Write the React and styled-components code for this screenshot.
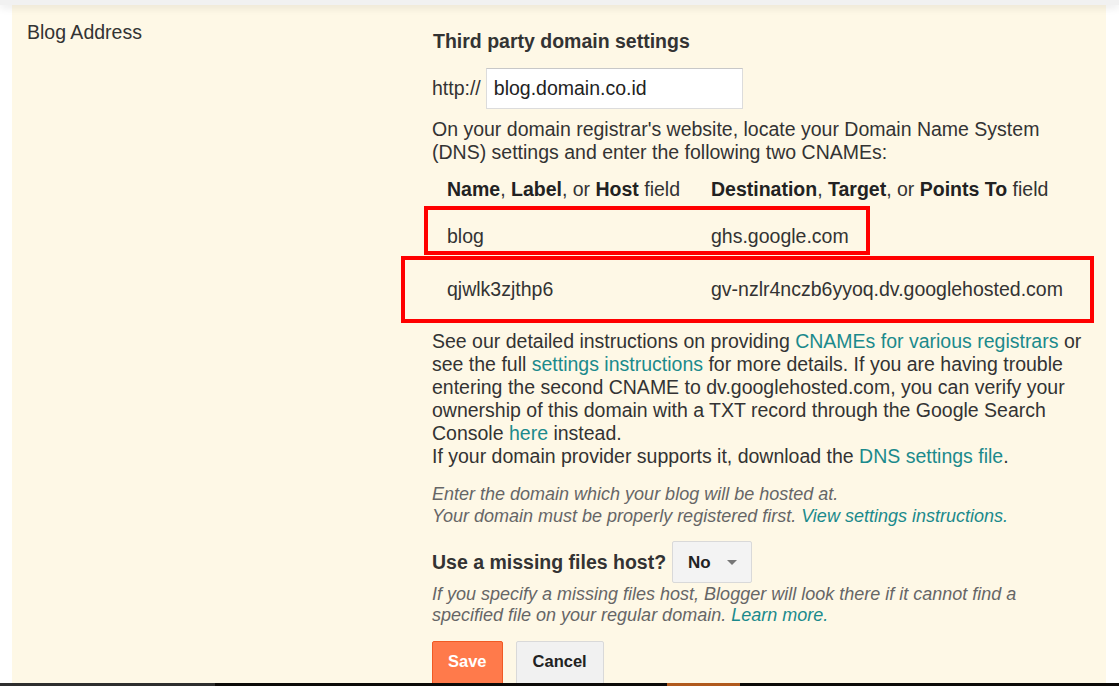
import React from "react";
import styled, { createGlobalStyle } from "styled-components";

const GlobalStyle = createGlobalStyle`
  html, body {
    margin: 0;
    padding: 0;
    background: #ffffff;
    overflow: hidden;
  }
  body {
    font-family: "Liberation Sans", Arial, sans-serif;
    color: #333;
  }
`;

const Page = styled.div`
  width: 1119px;
  height: 686px;
  position: relative;
  overflow: hidden;
  background: #fff;
`;

const TopStrip = styled.div`
  height: 5px;
  background: #f1f1f1;
  box-shadow: 0 2px 8px rgba(0, 0, 0, 0.12);
  position: relative;
  z-index: 1;
`;

const Panel = styled.div`
  margin: 0 13px 0 12px;
  background: #fef8e6;
  display: grid;
  grid-template-columns: 405px 1fr;
  padding: 14px 0 40px 15px;
  min-height: 800px;
`;

const Label = styled.div`
  font-size: 19.5px;
  line-height: 26px;
  color: #333;
`;

const Content = styled.div`
  font-size: 19.5px;
  line-height: 23px;
  color: #333;
  padding-top: 9px;
  max-width: 658px;
`;

const Title = styled.h3`
  margin: 0 0 14px 1px;
  font-size: 19.5px;
  font-weight: bold;
  color: #333;
  line-height: 26px;
`;

const UrlRow = styled.div`
  display: flex;
  align-items: center;
  gap: 5px;
  margin-bottom: 9px;
`;

const TextInput = styled.div`
  width: 257px;
  height: 41px;
  box-sizing: border-box;
  border: 1px solid #dcdcdc;
  border-top-color: #c8c8c8;
  background: #fff;
  padding: 0 7px;
  display: flex;
  align-items: center;
  font-size: 19.5px;
  color: #222;
`;

const Para = styled.p`
  margin: 0;
`;

const TableWrap = styled.div`
  position: relative;
  margin: 14px 0 11px;
`;

const Table = styled.table`
  border-collapse: collapse;
  font-size: 19.5px;
  color: #333;
`;

const Th = styled.th`
  text-align: left;
  font-weight: normal;
  padding: 0 15px 12px 15px;
  width: ${(p) => p.w || "auto"};
  white-space: nowrap;
  b {
    font-weight: bold;
    color: #222;
  }
`;

const Td = styled.td`
  padding: 12px 15px 18px;
  white-space: nowrap;
`;

const RedBox = styled.div`
  position: absolute;
  border: 4px solid #ff0000;
  box-sizing: border-box;
  pointer-events: none;
`;

const Link = styled.a`
  color: #1b8a8c;
  text-decoration: none;
`;

const Hint = styled.div`
  margin-top: 15px;
  font-size: 18px;
  line-height: 22px;
  font-style: italic;
  color: #666;
`;

const MissingRow = styled.div`
  display: flex;
  align-items: center;
  gap: 6px;
  margin-top: 14px;
`;

const BoldLabel = styled.span`
  font-weight: bold;
  color: #333;
`;

const Select = styled.div`
  width: 80px;
  height: 42px;
  box-sizing: border-box;
  border: 1px solid #d9d9d9;
  border-radius: 2px;
  background: #f3f3f3;
  display: flex;
  align-items: center;
  padding-left: 15px;
  gap: 16px;
  font-weight: bold;
  font-size: 17px;
  color: #222;
`;

const Caret = styled.span`
  width: 0;
  height: 0;
  border-left: 5px solid transparent;
  border-right: 5px solid transparent;
  border-top: 5px solid #777;
`;

const Hint2 = styled.div`
  margin-top: 1px;
  font-size: 18px;
  line-height: 21px;
  font-style: italic;
  color: #666;
`;

const Buttons = styled.div`
  display: flex;
  gap: 13px;
  margin-top: 15px;
`;

const Button = styled.button`
  height: 48px;
  padding: 0 ${(p) => (p.primary ? "15px" : "16px")} 8px;
  font-family: "Liberation Sans", Arial, sans-serif;
  font-size: 16.5px;
  font-weight: bold;
  border-radius: 2px;
  cursor: pointer;
  color: ${(p) => (p.primary ? "#fff" : "#222")};
  background: ${(p) => (p.primary ? "#ff7a4b" : "#f1f1f1")};
  border: 1px solid ${(p) => (p.primary ? "#f05a24" : "#d9d9d9")};
`;

const Taskbar = styled.div`
  position: absolute;
  left: 0;
  right: 0;
  bottom: 0;
  height: 3px;
  background: #0c0a08;
  display: flex;
`;

const TaskSeg = styled.div`
  width: ${(p) => p.w}px;
  background: ${(p) => p.c};
`;

export default function App() {
  return (
    <Page>
      <GlobalStyle />
      <TopStrip />
      <Panel>
        <Label>Blog Address</Label>
        <Content>
          <Title>Third party domain settings</Title>
          <UrlRow>
            <span>http://</span>
            <TextInput>blog.domain.co.id</TextInput>
          </UrlRow>
          <Para>
            On your domain registrar's website, locate your Domain Name System
            (DNS) settings and enter the following two CNAMEs:
          </Para>
          <TableWrap>
            <Table>
              <thead>
                <tr>
                  <Th w="234px">
                    <b>Name</b>, <b>Label</b>, or <b>Host</b> field
                  </Th>
                  <Th>
                    <b>Destination</b>, <b>Target</b>, or <b>Points To</b> field
                  </Th>
                </tr>
              </thead>
              <tbody>
                <tr>
                  <Td>blog</Td>
                  <Td>ghs.google.com</Td>
                </tr>
                <tr>
                  <Td>qjwlk3zjthp6</Td>
                  <Td>gv-nzlr4nczb6yyoq.dv.googlehosted.com</Td>
                </tr>
              </tbody>
            </Table>
            <RedBox style={{ left: -8, top: 28, width: 446, height: 49 }} />
            <RedBox style={{ left: -31, top: 78, width: 693, height: 67 }} />
          </TableWrap>
          <Para>
            See our detailed instructions on providing{" "}
            <Link href="#">CNAMEs for various registrars</Link> or see the full{" "}
            <Link href="#">settings instructions</Link> for more details. If you
            are having trouble entering the second CNAME to dv.googlehosted.com,
            you can verify your ownership of this domain with a TXT record
            through the Google Search Console <Link href="#">here</Link> instead.
            <br />
            If your domain provider supports it, download the{" "}
            <Link href="#">DNS settings file</Link>.
          </Para>
          <Hint>
            Enter the domain which your blog will be hosted at.
            <br />
            Your domain must be properly registered first.{" "}
            <Link href="#">View settings instructions.</Link>
          </Hint>
          <MissingRow>
            <BoldLabel>Use a missing files host?</BoldLabel>
            <Select>
              No <Caret />
            </Select>
          </MissingRow>
          <Hint2>
            If you specify a missing files host, Blogger will look there if it
            cannot find a
            <br />
            specified file on your regular domain.{" "}
            <Link href="#">Learn more.</Link>
          </Hint2>
          <Buttons>
            <Button primary>Save</Button>
            <Button>Cancel</Button>
          </Buttons>
        </Content>
      </Panel>
      <Taskbar>
        <TaskSeg w={215} c="#2e2e2e" />
        <TaskSeg w={452} c="#0c0a08" />
        <TaskSeg w={73} c="#b0591c" />
      </Taskbar>
    </Page>
  );
}
